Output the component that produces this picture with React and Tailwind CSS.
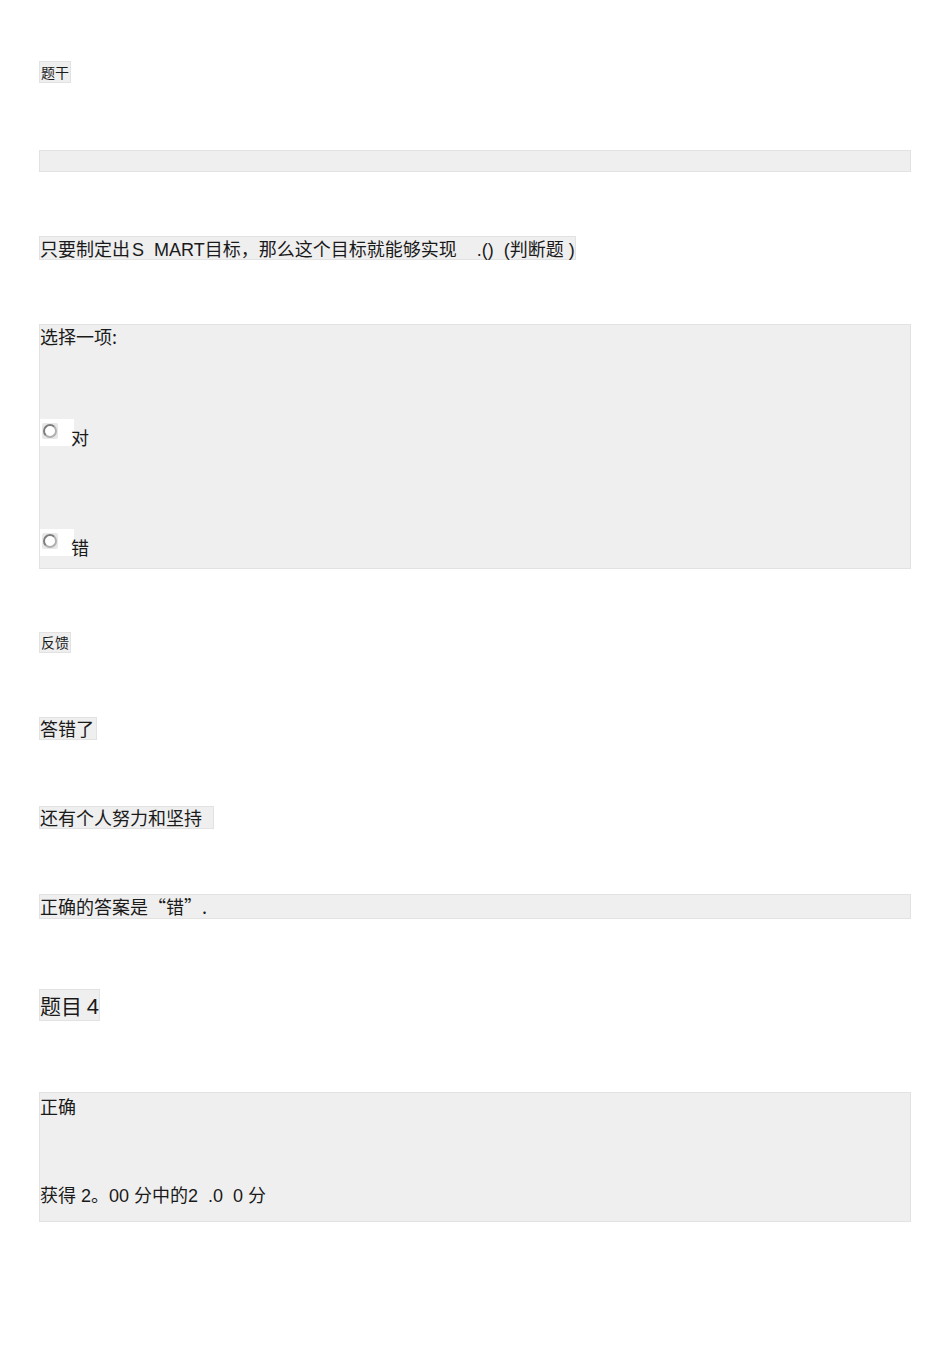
import React from 'react';

const font = 'font-["Noto_Sans_CJK_SC","Liberation_Sans",sans-serif]';
const latin = 'font-["Liberation_Sans",sans-serif]';

const Radio = () => (
    <span className="flex h-[27px] w-[34px] items-start bg-white pl-[2px] pt-[4px]">
        <span className="flex h-[16px] w-[16px] items-center justify-center rounded-[2px] bg-[#e8e8e8]">
            <span className="h-[14px] w-[14px] rounded-full border-[2.5px] border-[#b0b0b0] border-t-[#7e7e7e] border-l-[#7e7e7e] bg-white" />
        </span>
    </span>
);

const Option = ({ label }) => (
    <div className="flex items-start">
        <Radio />
        <span className="ml-[-3px] mt-[8px] text-[18px] leading-[21px]">{label}</span>
    </div>
);

const Tag = ({ children, className = '' }) => (
    <div className={`w-fit border border-[#e2e2e2] bg-[#efefef] ${className}`}>{children}</div>
);

export default function App() {
    return (
        <div className={`flex min-h-[1345px] flex-col bg-white px-[39px] text-[#1a1a1a] ${font}`}>
            <Tag className="mt-[61px] h-[22px] px-px text-[14px] leading-[20px]">题干</Tag>

            <div className="mt-[67px] h-[22px] border border-[#e2e2e2] bg-[#efefef]" />

            <Tag className="mt-[64px] h-[24px] text-[18px] leading-[22px]">
                只要制定出<span className={`${latin} ml-[2px]`}>S&nbsp;&nbsp;MART</span>目标，那么这个目标就能够实现<span className={latin}>&nbsp;&nbsp;&nbsp;&nbsp;.()&nbsp;&nbsp;(</span>判断题<span className={latin}>&nbsp;)</span>
            </Tag>

            <div className="mt-[64px] h-[245px] border border-[#e2e2e2] bg-[#efefef]">
                <div className="text-[18px] leading-[22px]">选择一项:</div>
                <div className="mt-[72px]">
                    <Option label="对" />
                </div>
                <div className="mt-[81px]">
                    <Option label="错" />
                </div>
            </div>

            <Tag className="mt-[63px] h-[21px] px-px text-[14px] leading-[19px]">反馈</Tag>

            <Tag className="mt-[64px] h-[23px] pr-[2px] text-[18px] leading-[21px]">答错了</Tag>

            <Tag className="mt-[66px] h-[23px] pr-[11px] text-[18px] leading-[21px]">还有个人努力和坚持</Tag>

            <div className="mt-[65px] h-[25px] border border-[#e2e2e2] bg-[#efefef] text-[18px] leading-[23px]">
                正确的答案是“错”.
            </div>

            <Tag className="mt-[70px] h-[32px] text-[21px] leading-[30px]">
                题目 <span className={`${latin} text-[22px]`}>4</span>
            </Tag>

            <div className="mt-[71px] h-[130px] border border-[#e2e2e2] bg-[#efefef] text-[18px] leading-[22px]">
                <div className="mt-[2px]">正确</div>
                <div className="mt-[66px]">
                    获得<span className={latin}>&nbsp;2</span>。<span className={latin}>00&nbsp;</span>分中的<span className={latin}>2&nbsp;&nbsp;.0&nbsp;&nbsp;0&nbsp;</span>分
                </div>
            </div>
        </div>
    );
}
